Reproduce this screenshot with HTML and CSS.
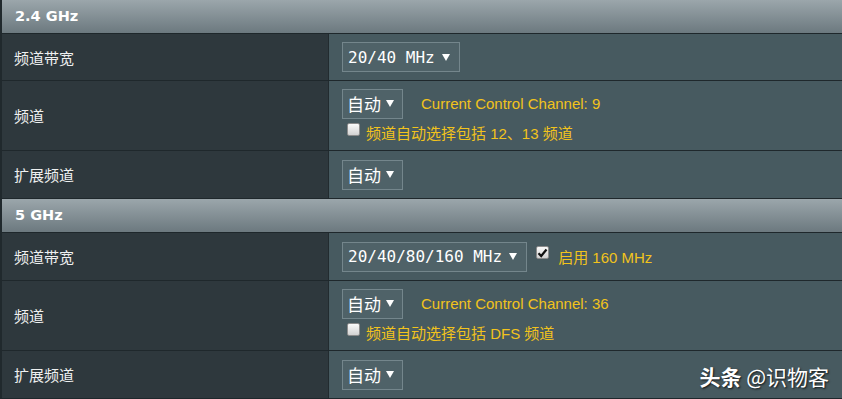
FILE: index.html
```html
<!DOCTYPE html>
<html lang="zh-CN">
<head>
    <meta charset="UTF-8">
    <meta name="viewport" content="width=device-width, initial-scale=1.0">
    <title>无线 - 专业设置</title>
    <link rel="stylesheet" href="styles.css">
</head>
<body>
    <div class="panel">
        <!-- 2.4 GHz -->
        <div class="band-head">2.4 GHz</div>

        <div class="row row-short first">
            <div class="label">频道带宽</div>
            <div class="value">
                <div class="select mono">20/40 MHz <span class="caret"></span></div>
            </div>
        </div>

        <div class="row row-tall">
            <div class="label">频道</div>
            <div class="value">
                <div class="line">
                    <div class="select">自动 <span class="caret"></span></div>
                    <span class="note">Current Control Channel: 9</span>
                </div>
                <div class="line check-line">
                    <span class="checkbox"></span>
                    <span class="note cjk">频道自动选择包括 12、13 频道</span>
                </div>
            </div>
        </div>

        <div class="row row-short">
            <div class="label">扩展频道</div>
            <div class="value">
                <div class="select">自动 <span class="caret"></span></div>
            </div>
        </div>

        <!-- 5 GHz -->
        <div class="band-head">5 GHz</div>

        <div class="row row-short">
            <div class="label">频道带宽</div>
            <div class="value">
                <div class="line">
                    <div class="select mono">20/40/80/160 MHz <span class="caret"></span></div>
                    <span class="checkbox checked">
                        <svg width="11" height="10" viewBox="0 0 11 10"><path d="M1.5 5.2 L4.2 8 L9.5 1.5" fill="none" stroke="#111" stroke-width="2.2"/></svg>
                    </span>
                    <span class="note cjk wide">启用 160 MHz</span>
                </div>
            </div>
        </div>

        <div class="row row-tall">
            <div class="label">频道</div>
            <div class="value">
                <div class="line">
                    <div class="select">自动 <span class="caret"></span></div>
                    <span class="note">Current Control Channel: 36</span>
                </div>
                <div class="line check-line">
                    <span class="checkbox"></span>
                    <span class="note cjk">频道自动选择包括 DFS 频道</span>
                </div>
            </div>
        </div>

        <div class="row row-short">
            <div class="label">扩展频道</div>
            <div class="value">
                <div class="select">自动 <span class="caret"></span></div>
            </div>
        </div>
    </div>

    <div class="watermark"><b>头条</b> @识物客</div>
</body>
</html>
```

FILE: styles.css
```css
body, html {
    margin: 0;
    height: 100%;
    overflow: hidden;
    background-color: #475a60;
    font-family: "Liberation Sans", "Noto Sans CJK SC", sans-serif;
}

.panel {
    border-left: 2px solid #20292d;
}

.band-head {
    height: 33px;
    border-bottom: 1px solid #1e272b;
    background: linear-gradient(to bottom, #9ba6ab, #6c797f);
    color: #ffffff;
    font-family: "DejaVu Sans", sans-serif;
    font-weight: bold;
    font-size: 14.5px;
    line-height: 33px;
    padding-left: 13px;
}

.row {
    display: flex;
    border-bottom: 1px solid #1f282c;
    box-sizing: border-box;
    height: 48px;
}

.row.first {
    height: 47px;
}

.row-tall {
    height: 70px;
}

.label {
    width: 327px;
    border-right: 1px solid #222b2f;
    background-color: #2e383d;
    color: #eef0f0;
    font-family: "Noto Sans CJK SC", sans-serif;
    font-size: 15px;
    padding-left: 12px;
    box-sizing: border-box;
    display: flex;
    align-items: center;
}

.value {
    flex: 1;
    background-color: #475a60;
    padding-left: 13px;
    display: flex;
    flex-direction: column;
    justify-content: center;
}

.line {
    display: flex;
    align-items: center;
}

.select {
    display: inline-flex;
    align-items: center;
    height: 30px;
    box-sizing: border-box;
    padding: 0 8px 0 4px;
    border: 1px solid #74868c;
    background-color: #4f6268;
    color: #ffffff;
    font-family: "Noto Sans CJK SC", sans-serif;
    font-size: 17px;
    gap: 5px;
    align-self: flex-start;
}

.select.mono {
    font-family: "DejaVu Sans Mono", monospace;
    font-size: 16px;
    padding: 0 9px 0 5px;
    gap: 7px;
}

.caret {
    width: 0;
    height: 0;
    border-left: 4px solid transparent;
    border-right: 4px solid transparent;
    border-top: 7px solid #ffffff;
}

.note {
    color: #f2c31c;
    font-size: 15px;
    margin-left: 18px;
}

.note.cjk {
    margin-left: 6px;
}

.note.wide {
    margin-left: 9px;
}

.check-line {
    margin-top: 3px;
    padding-left: 5px;
}

.checkbox {
    width: 13px;
    height: 13px;
    box-sizing: border-box;
    border: 1px solid #8c8c8c;
    border-radius: 2px;
    background: linear-gradient(to bottom, #fafafa, #d2d2d2);
    display: inline-flex;
    align-items: center;
    justify-content: center;
    margin-top: -6px;
}

.checkbox.checked {
    margin: -8px 0 0 9px;
}

.watermark {
    position: absolute;
    right: 13px;
    bottom: 8px;
    color: #ffffff;
    font-family: "Noto Sans CJK SC", sans-serif;
    font-size: 21px;
    text-shadow: 1px 1px 2px rgba(0, 0, 0, 0.8);
}
```
